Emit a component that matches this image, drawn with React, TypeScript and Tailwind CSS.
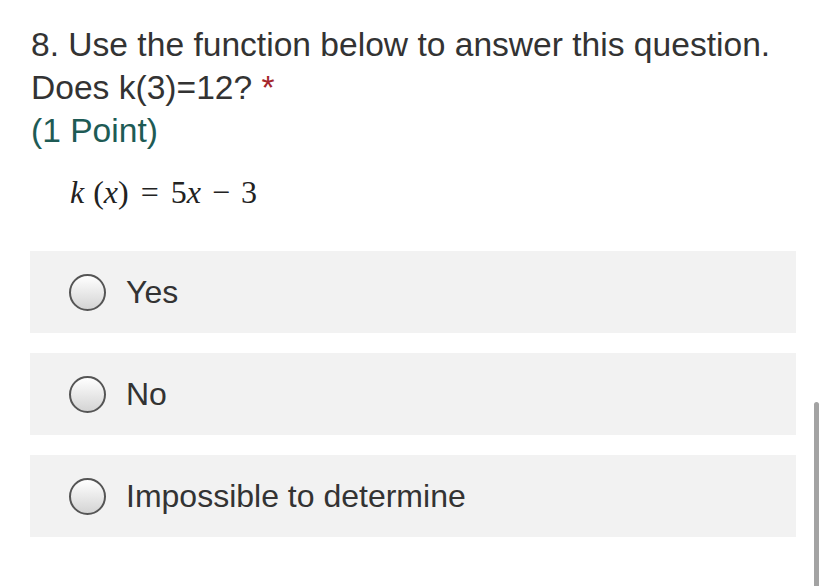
import React from "react";

const options = ["Yes", "No", "Impossible to determine"];

function Radio() {
  return (
    <span className="block w-[37px] h-[37px] rounded-full border-[2px] border-[#555] bg-gradient-to-b from-white to-[#d4d4d4] shrink-0" />
  );
}

export default function App() {
  return (
    <div className="relative w-[826px] h-[586px] bg-white overflow-hidden font-['Liberation_Sans',Arial,sans-serif] text-[#333333]">
      <div className="pl-[31px] pt-[23px] pr-[20px]">
        <div className="text-[33.6px] leading-[43px] whitespace-nowrap">
          <div>8. Use the function below to answer this question.</div>
          <div>
            Does k(3)=12? <span className="text-[#a4262c]">*</span>
          </div>
          <div className="text-[#1e5b55]">(1 Point)</div>
        </div>
        <div className="mt-[20px] pl-[39px] flex items-baseline font-['Liberation_Serif','Times_New_Roman',serif] text-[32px] leading-[40px] text-[#222]">
          <i>k</i>
          <span className="ml-[9px]">(</span>
          <i>x</i>
          <span>)</span>
          <span className="mx-[12px]">=</span>
          <span>5</span>
          <i>x</i>
          <span className="mx-[11px]">−</span>
          <span>3</span>
        </div>
      </div>
      <div className="mt-[39px] ml-[30px] w-[766px] flex flex-col gap-[20px]">
        {options.map((o) => (
          <div key={o} className="h-[82px] bg-[#f2f2f2] flex items-center pl-[39px] gap-[20px]">
            <Radio />
            <span className="text-[32px] text-[#333]">{o}</span>
          </div>
        ))}
      </div>
      <div className="absolute left-[814px] top-[402px] w-[5px] h-[190px] rounded-full bg-[#a3a3a3]" />
    </div>
  );
}
